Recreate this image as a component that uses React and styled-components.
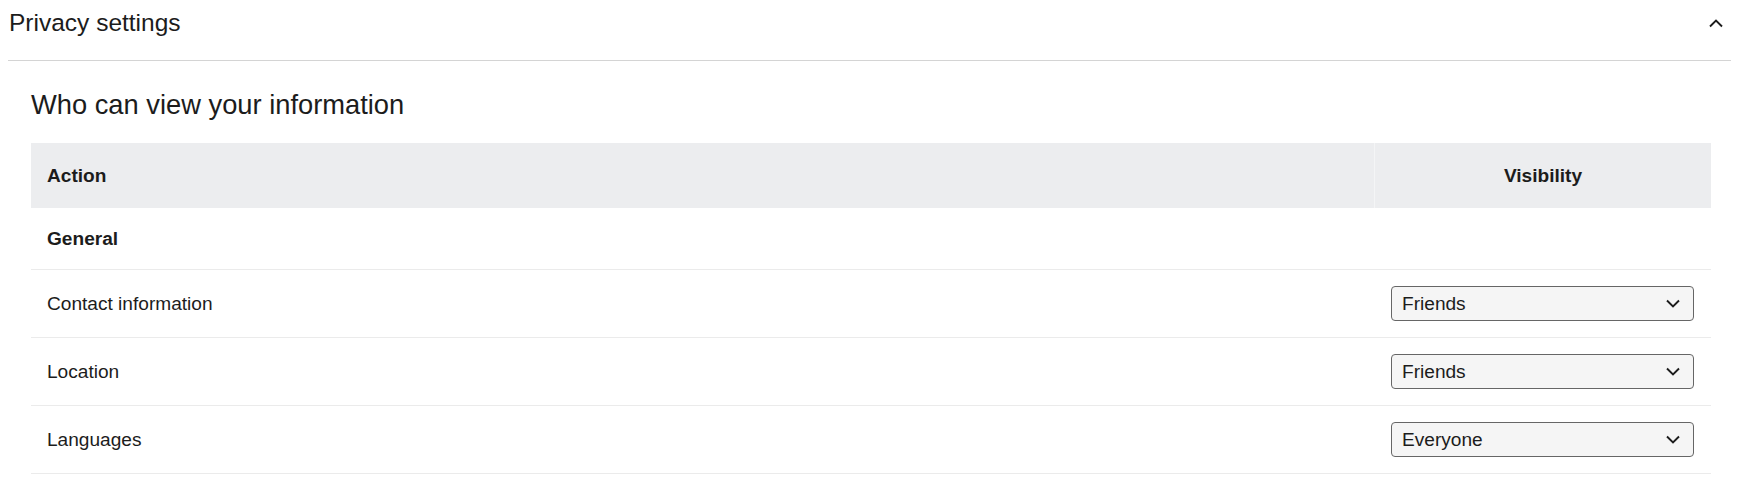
import styled, { createGlobalStyle } from "styled-components";

const GlobalStyle = createGlobalStyle`
  body {
    margin: 8px;
    background: #ffffff;
    font-family: "Liberation Sans", Arial, sans-serif;
    color: #1c1c1c;
  }
`;

const Section = styled.section`
  display: flex;
  flex-direction: column;
`;

const SectionHeader = styled.button`
  display: flex;
  align-items: center;
  justify-content: space-between;
  width: 100%;
  padding: 1px 8px 23px 1px;
  border: 0;
  border-bottom: 1px solid #d4d4d4;
  background: none;
  font-family: inherit;
  font-size: 24.5px;
  line-height: 28px;
  color: #1c1c1c;
  text-align: left;
  cursor: pointer;
`;

const Body = styled.div`
  padding: 28px 20px 0 23px;
`;

const Title = styled.h3`
  margin: 0 0 23px;
  font-size: 27.3px;
  line-height: 31px;
  font-weight: 400;
`;

const Table = styled.div`
  display: flex;
  flex-direction: column;
  font-size: 19.1px;
`;

const heights = { head: 65, group: 62, item: 68 };

const Row = styled.div`
  display: grid;
  grid-template-columns: 1fr 337px;
  box-sizing: border-box;
  height: ${(p) => heights[p.$variant]}px;
  background: ${(p) => (p.$variant === "head" ? "#ecedef" : "transparent")};
  border-bottom: ${(p) => (p.$variant === "head" ? "none" : "1px solid #ebebeb")};
  font-weight: ${(p) => (p.$variant === "item" ? 400 : 700)};
`;

const Cell = styled.div`
  display: flex;
  align-items: center;
  justify-content: ${(p) => (p.$center ? "center" : "flex-start")};
  padding: 0 16px;
`;

const VisibilityHead = styled(Cell)`
  border-left: 1px solid #f4f5f6;
`;

const ControlCell = styled(Cell)`
  padding: 0 17px;
`;

const SelectBox = styled.label`
  display: flex;
  align-items: center;
  width: 100%;
  height: 35px;
  box-sizing: border-box;
  padding: 0 13px 0 10px;
  border: 1px solid #666666;
  border-radius: 4px;
  background: #f5f5f5;
  cursor: pointer;
`;

const Select = styled.select`
  flex: 1;
  appearance: none;
  border: 0;
  padding: 0;
  background: transparent;
  font-family: inherit;
  font-size: 19.1px;
  color: #1c1c1c;
  outline: none;
  cursor: pointer;
`;

const Chevron = ({ up }) => (
  <svg width="14" height="9" viewBox="0 0 14 9" fill="none" style={{ pointerEvents: "none" }}>
    <polyline
      points={up ? "1,7.5 7,1.5 13,7.5" : "1,1.5 7,7.5 13,1.5"}
      stroke="#1c1c1c"
      strokeWidth="1.9"
    />
  </svg>
);

const OPTIONS = ["Everyone", "Friends", "Only me"];

const items = [
  { label: "Contact information", value: "Friends" },
  { label: "Location", value: "Friends" },
  { label: "Languages", value: "Everyone" },
];

function VisibilitySelect({ value }) {
  return (
    <SelectBox>
      <Select defaultValue={value}>
        {OPTIONS.map((o) => (
          <option key={o}>{o}</option>
        ))}
      </Select>
      <Chevron />
    </SelectBox>
  );
}

export default function App() {
  return (
    <>
      <GlobalStyle />
      <Section>
        <SectionHeader>
          Privacy settings
          <Chevron up />
        </SectionHeader>
        <Body>
          <Title>Who can view your information</Title>
          <Table>
            <Row $variant="head">
              <Cell>Action</Cell>
              <VisibilityHead $center>Visibility</VisibilityHead>
            </Row>
            <Row $variant="group">
              <Cell>General</Cell>
              <Cell />
            </Row>
            {items.map((item) => (
              <Row $variant="item" key={item.label}>
                <Cell>{item.label}</Cell>
                <ControlCell>
                  <VisibilitySelect value={item.value} />
                </ControlCell>
              </Row>
            ))}
          </Table>
        </Body>
      </Section>
    </>
  );
}
